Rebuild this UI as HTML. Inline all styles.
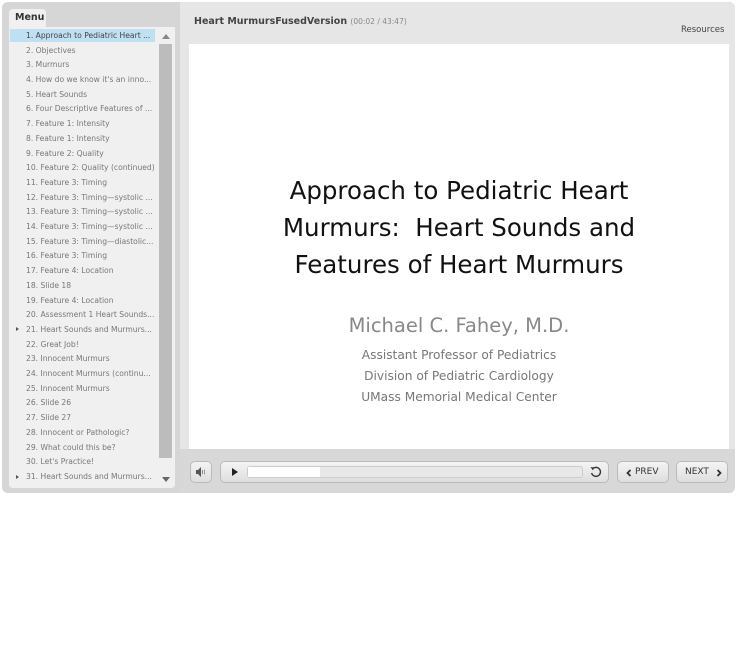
<!DOCTYPE html>
<html><head><style>
*{margin:0;padding:0;box-sizing:border-box}
body{width:736px;height:646px;background:#fff;font-family:"DejaVu Sans","Liberation Sans",sans-serif;position:relative;overflow:hidden}
.outer{position:absolute;left:2px;top:2px;width:733px;height:491px;background:#d6d6d6;border-radius:6px}
.main{position:absolute;left:180px;top:2px;width:555px;height:491px;background:#e6e6e6;border-radius:0 6px 6px 0}
.ctrl{position:absolute;left:180px;top:449px;width:555px;height:44px;background:#d8d8d8;border-radius:0 0 6px 0}
.menutab{position:absolute;left:9px;top:9px;width:37px;height:20px;background:#f0f0f0;border-radius:4px 4px 0 0;font-size:9.5px;font-weight:bold;color:#333;padding:3px 0 0 6px}
.list{position:absolute;left:9px;top:27px;width:166px;height:461px;background:#f0f0f0;border-radius:0 0 4px 4px}
.item{position:absolute;left:1px;width:145px;height:13px;font-size:7.6px;color:#777;padding-left:16px;line-height:13px;white-space:nowrap;overflow:hidden}
.sel{background:#bfe0f2;color:#444}
.track{position:absolute;left:159px;top:44px;width:13px;height:414px;background:#bcbcbc}
.arr{position:absolute;left:162px;width:0;height:0;border-left:4px solid transparent;border-right:4px solid transparent}
.tri{position:absolute;left:6px;width:0;height:0;border-top:2.5px solid transparent;border-bottom:2.5px solid transparent;border-left:3px solid #555}
.slide{position:absolute;left:189px;top:44px;width:540px;height:405px;background:#fff;text-align:center;font-family:"DejaVu Sans","Liberation Sans",sans-serif}
.btn{position:absolute;top:461px;height:22px;border:1px solid #bbb;border-radius:5px;background:linear-gradient(#f4f4f4,#dedede);font-size:9px;color:#333;line-height:20px}
</style></head><body>
<div class="outer"></div>
<div class="main"></div>
<div class="ctrl"></div>
<div style="position:absolute;left:194px;top:16px;font-size:9.5px;font-weight:bold;color:#444">Heart MurmursFusedVersion <span style="font-weight:normal;font-size:7.5px;color:#888">(00:02 / 43:47)</span></div>
<div style="position:absolute;left:681px;top:25px;font-size:8.5px;color:#444">Resources</div>
<div class="menutab">Menu</div>
<div class="list"></div>
<div class="track"></div>
<div class="arr" style="top:34px;border-bottom:5px solid #888"></div>
<div class="arr" style="top:477px;border-top:5px solid #666"></div>
<div class="item sel" style="left:10px;top:29px">1. Approach to Pediatric Heart ...</div>
<div class="item" style="left:10px;top:43.5px">2. Objectives</div>
<div class="item" style="left:10px;top:58.2px">3. Murmurs</div>
<div class="item" style="left:10px;top:73px">4. How do we know it's an inno...</div>
<div class="item" style="left:10px;top:87.7px">5. Heart Sounds</div>
<div class="item" style="left:10px;top:102.4px">6. Four Descriptive Features of ...</div>
<div class="item" style="left:10px;top:117.1px">7. Feature 1: Intensity</div>
<div class="item" style="left:10px;top:131.8px">8. Feature 1: Intensity</div>
<div class="item" style="left:10px;top:146.5px">9. Feature 2: Quality</div>
<div class="item" style="left:10px;top:161.2px">10. Feature 2: Quality (continued)</div>
<div class="item" style="left:10px;top:175.9px">11. Feature 3: Timing</div>
<div class="item" style="left:10px;top:190.6px">12. Feature 3: Timing—systolic ...</div>
<div class="item" style="left:10px;top:205.3px">13. Feature 3: Timing—systolic ...</div>
<div class="item" style="left:10px;top:220px">14. Feature 3: Timing—systolic ...</div>
<div class="item" style="left:10px;top:234.7px">15. Feature 3: Timing—diastolic...</div>
<div class="item" style="left:10px;top:249.4px">16. Feature 3: Timing</div>
<div class="item" style="left:10px;top:264.1px">17. Feature 4: Location</div>
<div class="item" style="left:10px;top:278.8px">18. Slide 18</div>
<div class="item" style="left:10px;top:293.5px">19. Feature 4: Location</div>
<div class="item" style="left:10px;top:308.2px">20. Assessment 1 Heart Sounds...</div>
<div class="item" style="left:10px;top:322.9px">21. Heart Sounds and Murmurs...</div>
<div class="tri" style="left:16px;top:327px"></div>
<div class="item" style="left:10px;top:337.6px">22. Great Job!</div>
<div class="item" style="left:10px;top:352.3px">23. Innocent Murmurs</div>
<div class="item" style="left:10px;top:367px">24. Innocent Murmurs (continu...</div>
<div class="item" style="left:10px;top:381.7px">25. Innocent Murmurs</div>
<div class="item" style="left:10px;top:396.4px">26. Slide 26</div>
<div class="item" style="left:10px;top:411.1px">27. Slide 27</div>
<div class="item" style="left:10px;top:425.8px">28. Innocent or Pathologic?</div>
<div class="item" style="left:10px;top:440.5px">29. What could this be?</div>
<div class="item" style="left:10px;top:455.2px">30. Let's Practice!</div>
<div class="item" style="left:10px;top:470px">31. Heart Sounds and Murmurs...</div>
<div class="tri" style="left:16px;top:474.5px"></div>
<div class="slide">
<div style="position:absolute;left:0;width:540px;top:128px;font-size:24.5px;line-height:37px;color:#111">Approach to Pediatric Heart<br>Murmurs:&nbsp; Heart Sounds and<br>Features of Heart Murmurs</div>
<div style="position:absolute;left:0;width:540px;top:270px;font-size:19.5px;color:#888">Michael C. Fahey, M.D.</div>
<div style="position:absolute;left:0;width:540px;top:301px;font-size:12.2px;line-height:21px;color:#777">Assistant Professor of Pediatrics<br>Division of Pediatric Cardiology<br>UMass Memorial Medical Center</div>
</div>
<div class="btn" style="left:190px;width:22px"><svg width="20" height="20" viewBox="0 0 20 20"><path d="M5 8h2l3-3v10l-3-3H5z" fill="#555"/><rect x="11" y="8" width="1" height="4" fill="#888"/><rect x="13" y="7.5" width="1" height="5" fill="#999"/></svg></div>
<div class="btn" style="left:220px;width:389px"><svg width="20" height="20" viewBox="0 0 20 20" style="position:absolute;left:3px;top:0"><path d="M8 6l6 4-6 4z" fill="#222"/></svg>
<div style="position:absolute;left:26px;top:4px;width:336px;height:12px;border:1px solid #ccc;border-radius:3px;background:#e8e8e8"><div style="width:72px;height:10px;background:#fff"></div></div>
<svg width="14" height="14" viewBox="0 0 14 14" style="position:absolute;left:368px;top:3px"><path d="M4 3.5A4.5 4.5 0 1 1 2.6 8" fill="none" stroke="#333" stroke-width="1.4"/><path d="M1.5 2l3.5 0.5-1 3z" fill="#333"/></svg></div>
<div class="btn" style="left:617px;width:52px"><svg width="8" height="8" viewBox="0 0 8 8" style="position:absolute;left:7px;top:7px"><path d="M5.5 1L2.5 4l3 3" fill="none" stroke="#333" stroke-width="1.8"/></svg><span style="position:absolute;left:17px">PREV</span></div>
<div class="btn" style="left:676px;width:52px"><span style="position:absolute;left:8px">NEXT</span><svg width="8" height="8" viewBox="0 0 8 8" style="position:absolute;left:38px;top:7px"><path d="M2.5 1l3 3-3 3" fill="none" stroke="#333" stroke-width="1.8"/></svg></div>
</body></html>
